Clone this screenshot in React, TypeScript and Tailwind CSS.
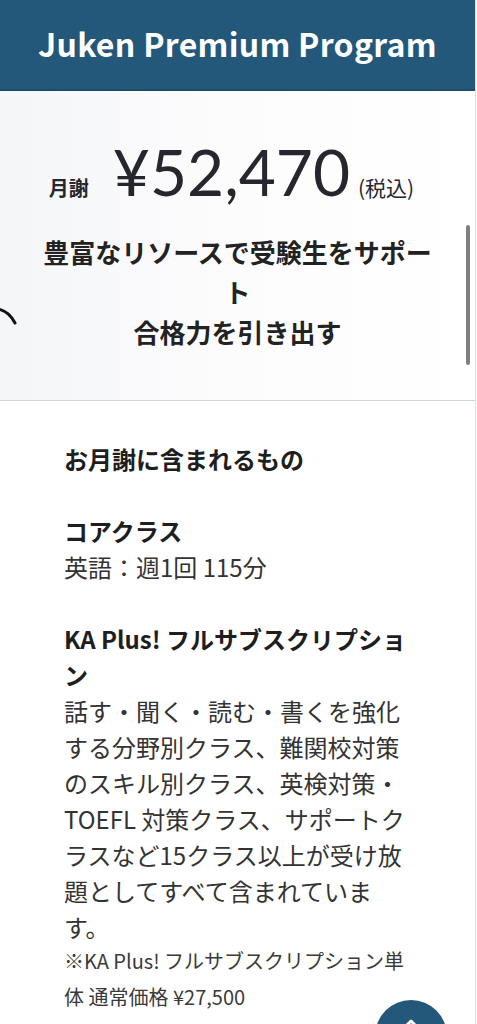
import React from "react";

const jp = { fontFamily: '"Noto Sans CJK JP", "Noto Sans", sans-serif' };

export default function App() {
  return (
    <div className="w-[477px] min-h-[1024px] bg-white" style={jp}>
      <div className="w-[476px] border-r border-[#d9dfe6] min-h-[1024px] relative">
        {/* Header */}
        <div className="h-[91px] bg-[#23587a] border-b-2 border-[#1d4c6a] flex items-center justify-center">
          <h1 className="text-white font-bold text-[32px] leading-none tracking-[0.3px] pb-[4px]">
            Juken Premium Program
          </h1>
        </div>

        {/* Price box */}
        <div className="relative bg-gradient-to-r from-[#f5f6f8] via-[#fcfcfd] to-white border-b border-[#c9d5e1] pt-[49px] pb-[48px]">
          <svg
            className="absolute left-0 top-[212px]"
            width="20"
            height="26"
            viewBox="0 0 20 26"
            fill="none"
          >
            <path d="M-2 6 Q9 8 15 20" stroke="#111" strokeWidth="3" strokeLinecap="round" />
          </svg>
          <div className="absolute right-[5px] top-[134px] w-[4px] h-[140px] rounded-full bg-[#808080]" />

          <div className="h-[60px] pr-[12px] flex items-baseline justify-center text-[#26262e]">
            <span className="text-[20px] font-bold mr-[24px]">月謝</span>
            <span
              className="text-[64px] leading-none font-normal"
              style={{ fontFamily: 'Lato, "Noto Sans", sans-serif' }}
            >
              ¥52,470
            </span>
            <span className="text-[21px] ml-[8px]">(税込)</span>
          </div>

          <p className="mt-[32px] px-[34px] text-center text-[26px] leading-[40px] font-bold text-[#222]">
            豊富なリソースで受験生をサポート
            <br />
            合格力を引き出す
          </p>
        </div>

        {/* Included section */}
        <div className="pl-[64px] pt-[40px] pb-[40px]">
          <div className="w-[348px] text-[24px] leading-[36px] text-[#333]">
            <h2 className="font-bold text-[#1e1e1e]">お月謝に含まれるもの</h2>
            <h3 className="mt-[36px] font-bold text-[#1e1e1e]">コアクラス</h3>
            <p>英語：週1回 115分</p>
            <h3 className="mt-[36px] font-bold text-[#1e1e1e]">KA Plus! フルサブスクリプション</h3>
            <p>
              話す・聞く・読む・書くを強化する分野別クラス、難関校対策のスキル別クラス、英検対策・TOEFL 対策クラス、サポートクラスなど15クラス以上が受け放題としてすべて含まれています。
            </p>
            <p className="text-[20px] leading-[36px] text-[#3a3a3a] -mt-[2px]">
              ※KA Plus! フルサブスクリプション単体 通常価格 ¥27,500
            </p>
          </div>
        </div>
      </div>

      {/* Scroll to top button */}
      <button className="fixed left-[375px] top-[1000px] w-[72px] h-[72px] rounded-full bg-[#23587a] flex items-start justify-center">
        <svg width="24" height="16" viewBox="0 0 24 16" className="mt-[16px]">
          <path d="M4 13 L12 5 L20 13" stroke="white" strokeWidth="3" fill="none" strokeLinecap="round" strokeLinejoin="round" />
        </svg>
      </button>
    </div>
  );
}
